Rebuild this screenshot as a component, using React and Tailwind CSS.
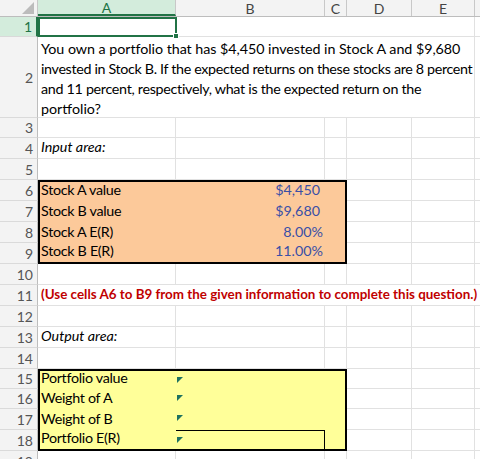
import React from 'react'

const font = { fontFamily: 'Lato, "Liberation Sans", sans-serif' }

function RowHead({ n, h, active }) {
  return (
    <div
      className={
        'w-[38px] shrink-0 flex items-center justify-end pr-[4px] text-[14px] border-b ' +
        h +
        (active
          ? ' bg-[#d3ecdc] text-[#217346] border-r-2 border-r-[#217346] border-b-[#d9d9d9]'
          : ' bg-[#f3f3f3] text-[#555] border-r border-r-[#bdbdbd] border-b-[#dadada]')
      }
    >
      {n}
    </div>
  )
}

function Cell({ w, children, className = '' }) {
  return (
    <div className={'shrink-0 border-r border-b border-[#e1e1e1] ' + w + ' ' + className}>
      {children}
    </div>
  )
}

function PlainRow({ n, h, a, aClass = '' }) {
  return (
    <div className={'flex ' + h}>
      <RowHead n={n} h={h} />
      <Cell w="w-[138px]" className={'flex items-end pl-[3px] pb-[1px] whitespace-nowrap ' + aClass}>{a}</Cell>
      <Cell w="w-[149px]" />
      <Cell w="w-[22px]" />
      <Cell w="w-[65px]" />
      <Cell w="w-[63px]" />
      <div className="flex-1 border-b border-[#e1e1e1]" />
    </div>
  )
}

function Flag() {
  return (
    <svg width="6" height="6" viewBox="0 0 6 6" className="absolute left-[1px] top-[6px]">
      <polygon points="0,0 6,0 0,6" fill="#1f7260" />
    </svg>
  )
}

function BoxRow({ n, h, label, value, pr, bg, first, last, flag, inner }) {
  return (
    <div className={'flex ' + h}>
      <RowHead n={n} h={h} />
      <div
        className={
          'w-[309px] shrink-0 flex border-l-2 border-r-2 border-black ' +
          bg +
          (first ? ' border-t-2' : '') +
          (last ? ' border-b-2' : '')
        }
      >
        <div className="w-[136px] shrink-0 pl-[1px] flex items-end pb-[1px] whitespace-nowrap tracking-[-0.3px]">{label}</div>
        <div
          className={
            'w-[149px] shrink-0 relative flex items-end justify-end pb-[1px] text-[#3a4fa6] ' +
            pr +
            (inner ? ' border-t border-r border-black' : '')
          }
        >
          {flag && <Flag />}
          {value}
        </div>
        <div className="flex-1" />
      </div>
      <Cell w="w-[65px]" />
      <Cell w="w-[63px]" />
      <div className="flex-1 border-b border-[#e1e1e1]" />
    </div>
  )
}

export default function App() {
  const orange = 'bg-[#fcc99a]'
  const yellow = 'bg-[#ffff99]'
  return (
    <div className="w-[480px] h-[459px] overflow-hidden bg-white text-[14.3px] text-black" style={font}>
      {/* column headers */}
      <div className="flex h-[17px] text-[14px] text-[#444] bg-[#f3f3f3] border-b border-[#bdbdbd]">
        <div className="w-[38px] shrink-0 relative border-r border-[#c8c8c8]">
          <svg width="12" height="12" viewBox="0 0 12 12" className="absolute right-[3px] bottom-[2px]">
            <polygon points="12,0 12,12 0,12" fill="#bcbcbc" />
          </svg>
        </div>
        <div className="w-[138px] shrink-0 flex items-center justify-center bg-[#d3ecdc] text-[#217346] border-b-2 border-[#217346] border-r border-r-[#c8c8c8]">
          A
        </div>
        <div className="w-[149px] shrink-0 flex items-center justify-center border-r border-[#c8c8c8]">B</div>
        <div className="w-[22px] shrink-0 flex items-center justify-center border-r border-[#c8c8c8]">C</div>
        <div className="w-[65px] shrink-0 flex items-center justify-center border-r border-[#c8c8c8]">D</div>
        <div className="w-[63px] shrink-0 flex items-center justify-center border-r border-[#c8c8c8]">E</div>
        <div className="flex-1" />
      </div>

      {/* row 1 */}
      <div className="flex h-[20px]">
        <RowHead n={1} h="h-[20px]" active />
        <div className="w-[139px] shrink-0 relative border-2 border-[#217346]">
          <div className="absolute right-[-4px] bottom-[-4px] w-[6px] h-[6px] bg-[#217346] border border-white" />
        </div>
        <div className="w-[298px] shrink-0 border-r border-b border-[#e1e1e1]" />
        <div className="flex-1 border-b border-[#e1e1e1]" />
      </div>

      {/* row 2 */}
      <div className="flex h-[81px]">
        <RowHead n={2} h="h-[81px]" />
        <div className="w-[437px] shrink-0 border-r border-b border-[#e1e1e1] pl-[3px] pt-[2px] leading-[20px] whitespace-nowrap">
          <div className="tracking-[-0.05px]">You own a portfolio that has $4,450 invested in Stock A and $9,680</div>
          <div className="tracking-[-0.34px]">invested in Stock B. If the expected returns on these stocks are 8 percent</div>
          <div className="tracking-[-0.3px]">and 11 percent, respectively, what is the expected return on the</div>
          <div>portfolio?</div>
        </div>
        <div className="flex-1 border-b border-[#e1e1e1]" />
      </div>

      <PlainRow n={3} h="h-[20px]" />
      <PlainRow n={4} h="h-[21px]" a="Input area:" aClass="italic" />
      <PlainRow n={5} h="h-[21px]" />

      <BoxRow n={6} h="h-[21px]" bg={orange} label="Stock A value" value="$4,450" pr="pr-[5px]" first />
      <BoxRow n={7} h="h-[21px]" bg={orange} label="Stock B value" value="$9,680" pr="pr-[5px]" />
      <BoxRow n={8} h="h-[21px]" bg={orange} label="Stock A E(R)" value="8.00%" pr="pr-[2px]" />
      <BoxRow n={9} h="h-[21px]" bg={orange} label="Stock B E(R)" value="11.00%" pr="pr-[2px]" last />

      <PlainRow n={10} h="h-[21px]" />

      {/* row 11 */}
      <div className="flex h-[21px]">
        <RowHead n={11} h="h-[21px]" />
        <div className="w-[437px] shrink-0 border-b border-[#e1e1e1] pl-[3px] pb-[1px] flex items-end whitespace-nowrap font-bold text-[13.4px] text-[#c00000]">
          (Use cells A6 to B9 from the given information to complete this question.)
        </div>
        <div className="flex-1 border-b border-[#e1e1e1]" />
      </div>

      <PlainRow n={12} h="h-[21px]" />
      <PlainRow n={13} h="h-[21px]" a="Output area:" aClass="italic" />
      <PlainRow n={14} h="h-[21px]" />

      <BoxRow n={15} h="h-[20px]" bg={yellow} label="Portfolio value" pr="pr-[5px]" first flag />
      <BoxRow n={16} h="h-[20px]" bg={yellow} label="Weight of A" pr="pr-[5px]" flag />
      <BoxRow n={17} h="h-[21px]" bg={yellow} label="Weight of B" pr="pr-[5px]" flag />
      <BoxRow n={18} h="h-[21px]" bg={yellow} label="Portfolio E(R)" pr="pr-[5px]" last flag inner />

      <PlainRow n={19} h="h-[21px]" />
    </div>
  )
}
